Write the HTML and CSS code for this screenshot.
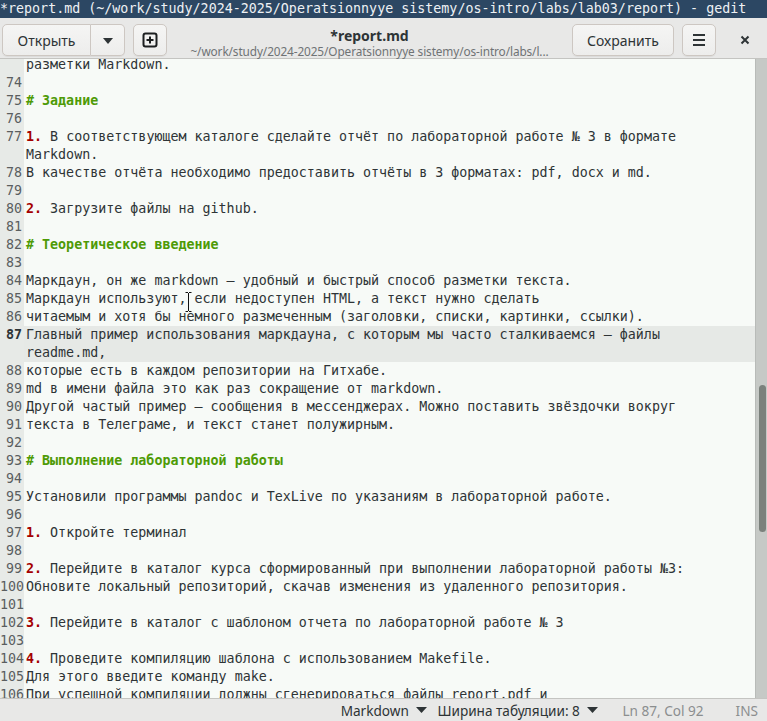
FILE: index.html
```html
<!DOCTYPE html>
<html lang="ru">
<head>
<meta charset="utf-8">
<title>gedit</title>
<link rel="stylesheet" href="styles.css">
</head>
<body>
<div class="window">
  <div class="titlebar">*report.md (~/work/study/2024-2025/Operatsionnyye sistemy/os-intro/labs/lab03/report) - gedit</div>
  <div class="headerbar">
    <div class="linked">
      <button class="btn open">Открыть</button>
      <button class="btn drop"><svg width="12" height="8" viewBox="0 0 12 8"><path d="M1 1h10L6 7z" fill="#2e3436"/></svg></button>
    </div>
    <button class="btn newtab"><svg width="16" height="16" viewBox="0 0 16 16"><rect x="1.5" y="1.5" width="13" height="13" rx="2" fill="none" stroke="#1c1f20" stroke-width="2"/><path d="M8 4.5v7M4.5 8h7" stroke="#1c1f20" stroke-width="2"/></svg></button>
    <div class="title">
      <div class="t1">*report.md</div>
      <div class="t2">~/work/study/2024-2025/Operatsionnyye sistemy/os-intro/labs/l...</div>
    </div>
    <button class="btn save">Сохранить</button>
    <button class="btn menu"><svg width="16" height="16" viewBox="0 0 16 16"><path d="M2 3h12M2 8h12M2 13h12" stroke="#2e3436" stroke-width="2"/></svg></button>
    <div class="close"><svg width="10" height="10" viewBox="0 0 10 10"><path d="M1.5 1.5l7 7M8.5 1.5l-7 7" stroke="#2e3436" stroke-width="2"/></svg></div>
  </div>
  <div class="editor">
    <div class="view">
      <div class="lines">
        <div class="row"><span class="ln"></span><span class="tx">разметки Markdown.</span></div>
        <div class="row"><span class="ln">74</span><span class="tx"></span></div>
        <div class="row"><span class="ln">75</span><span class="tx h"># Задание</span></div>
        <div class="row"><span class="ln">76</span><span class="tx"></span></div>
        <div class="row"><span class="ln">77</span><span class="tx"><b class="n">1.</b> В соответствующем каталоге сделайте отчёт по лабораторной работе № 3 в формате</span></div>
        <div class="row"><span class="ln"></span><span class="tx">Markdown.</span></div>
        <div class="row"><span class="ln">78</span><span class="tx">В качестве отчёта необходимо предоставить отчёты в 3 форматах: pdf, docx и md.</span></div>
        <div class="row"><span class="ln">79</span><span class="tx"></span></div>
        <div class="row"><span class="ln">80</span><span class="tx"><b class="n">2.</b> Загрузите файлы на github.</span></div>
        <div class="row"><span class="ln">81</span><span class="tx"></span></div>
        <div class="row"><span class="ln">82</span><span class="tx h"># Теоретическое введение</span></div>
        <div class="row"><span class="ln">83</span><span class="tx"></span></div>
        <div class="row"><span class="ln">84</span><span class="tx">Маркдаун, он же markdown — удобный и быстрый способ разметки текста.</span></div>
        <div class="row"><span class="ln">85</span><span class="tx">Маркдаун используют, если недоступен HTML, а текст нужно сделать</span></div>
        <div class="row"><span class="ln">86</span><span class="tx">читаемым и хотя бы немного размеченным (заголовки, списки, картинки, ссылки).</span></div>
        <div class="row cur"><span class="ln">87</span><span class="tx">Главный пример использования маркдауна, с которым мы часто сталкиваемся — файлы</span></div>
        <div class="row cur"><span class="ln"></span><span class="tx">readme.md,</span></div>
        <div class="row"><span class="ln">88</span><span class="tx">которые есть в каждом репозитории на Гитхабе.</span></div>
        <div class="row"><span class="ln">89</span><span class="tx">md в имени файла это как раз сокращение от markdown.</span></div>
        <div class="row"><span class="ln">90</span><span class="tx">Другой частый пример — сообщения в мессенджерах. Можно поставить звёздочки вокруг</span></div>
        <div class="row"><span class="ln">91</span><span class="tx">текста в Телеграме, и текст станет полужирным.</span></div>
        <div class="row"><span class="ln">92</span><span class="tx"></span></div>
        <div class="row"><span class="ln">93</span><span class="tx h"># Выполнение лабораторной работы</span></div>
        <div class="row"><span class="ln">94</span><span class="tx"></span></div>
        <div class="row"><span class="ln">95</span><span class="tx">Установили программы pandoc и TexLive по указаниям в лабораторной работе.</span></div>
        <div class="row"><span class="ln">96</span><span class="tx"></span></div>
        <div class="row"><span class="ln">97</span><span class="tx"><b class="n">1.</b> Откройте терминал</span></div>
        <div class="row"><span class="ln">98</span><span class="tx"></span></div>
        <div class="row"><span class="ln">99</span><span class="tx"><b class="n">2.</b> Перейдите в каталог курса сформированный при выполнении лабораторной работы №3:</span></div>
        <div class="row"><span class="ln">100</span><span class="tx">Обновите локальный репозиторий, скачав изменения из удаленного репозитория.</span></div>
        <div class="row"><span class="ln">101</span><span class="tx"></span></div>
        <div class="row"><span class="ln">102</span><span class="tx"><b class="n">3.</b> Перейдите в каталог с шаблоном отчета по лабораторной работе № 3</span></div>
        <div class="row"><span class="ln">103</span><span class="tx"></span></div>
        <div class="row"><span class="ln">104</span><span class="tx"><b class="n">4.</b> Проведите компиляцию шаблона с использованием Makefile.</span></div>
        <div class="row"><span class="ln">105</span><span class="tx">Для этого введите команду make.</span></div>
        <div class="row"><span class="ln">106</span><span class="tx">При успешной компиляции должны сгенерироваться файлы report.pdf и</span></div>
      </div>
      <svg class="ibeam" width="7" height="20" viewBox="0 0 7 20"><path d="M0.5 0.5h2.5M4 0.5h2.5M3.5 1v18M0.5 19.5h2.5M4 19.5h2.5" stroke="#111" stroke-width="1"/></svg>
    </div>
    <div class="scroll"><div class="thumb"></div></div>
  </div>
  <div class="statusbar">
    <span class="st">Markdown <svg width="11" height="7" viewBox="0 0 11 7"><path d="M0 0h11L5.5 6z" fill="#2e3436"/></svg></span>
    <span class="st tab">Ширина табуляции: 8 <svg width="11" height="7" viewBox="0 0 11 7"><path d="M0 0h11L5.5 6z" fill="#2e3436"/></svg></span>
    <span class="st dim pos">Ln 87, Col 92</span>
    <span class="st dim ins">INS</span>
  </div>
</div>
</body>
</html>
```
FILE: styles.css
```css
html, body {
  margin: 0;
  padding: 0;
  background: #e8e8e7;
}
.window {
  width: 767px;
  height: 721px;
  display: flex;
  flex-direction: column;
  overflow: hidden;
}
.titlebar {
  height: 18px;
  flex: none;
  background: #2c4763;
  color: #eef1f4;
  font-family: "DejaVu Sans Mono", monospace;
  font-size: 13.33px;
  line-height: 18px;
  white-space: pre;
  overflow: hidden;
}
.headerbar {
  height: 41px;
  flex: none;
  box-sizing: border-box;
  border-bottom: 1px solid #c4c4c1;
  background: #e8e8e7;
  display: flex;
  align-items: flex-start;
  padding: 6px 1px 0 2px;
  font-family: "Noto Sans", "Liberation Sans", sans-serif;
}
.btn {
  height: 32px;
  box-sizing: border-box;
  border: 1px solid #cdc7c2;
  border-radius: 5px;
  background: linear-gradient(#f5f5f4, #ededec);
  box-shadow: 0 1px 0 rgba(0,0,0,0.05);
  font-family: "Noto Sans", "Liberation Sans", sans-serif;
  font-size: 14px;
  color: #2e3436;
  padding: 0;
  display: flex;
  align-items: center;
  justify-content: center;
}
.linked {
  display: flex;
}
.open {
  width: 89px;
  border-radius: 5px 0 0 5px;
}
.drop {
  width: 34px;
  border-left: none;
  border-radius: 0 5px 5px 0;
  padding-top: 1px;
}
.newtab {
  width: 34px;
  margin-left: 8px;
}
.title {
  flex: 1;
  min-width: 0;
  text-align: center;
  padding-top: 3px;
}
.t1 {
  font-weight: bold;
  font-size: 14px;
  line-height: 18px;
  color: #2e3436;
}
.t2 {
  font-size: 11.8px;
  line-height: 12px;
  color: #6f7375;
  white-space: nowrap;
  letter-spacing: -0.1px;
}
.save {
  width: 102px;
}
.menu {
  width: 34px;
  margin-left: 8px;
}
.close {
  width: 42px;
  height: 32px;
  margin-left: 8px;
  display: flex;
  align-items: center;
  justify-content: center;
}
.editor {
  flex: 1;
  min-height: 0;
  display: flex;
  background: #f7faf7;
}
.view {
  flex: 1;
  min-width: 0;
  overflow: hidden;
  position: relative;
}
.lines {
  margin-top: -3px;
  font-family: "DejaVu Sans Mono", monospace;
  font-size: 13.33px;
  line-height: 18px;
  color: #2e3436;
}
.row {
  display: flex;
  height: 18px;
}
.ln {
  flex: none;
  width: 24px;
  box-sizing: border-box;
  padding-right: 2px;
  background: #e7eae7;
  text-align: right;
  color: #5a5e5f;
  white-space: pre;
}
.tx {
  flex: 1;
  padding-left: 2px;
  white-space: pre;
  overflow: hidden;
}
.cur .tx {
  background: #e6e9e6;
}
.cur .ln {
  font-weight: bold;
  color: #2e3436;
}
.h {
  color: #4e9a06;
  font-weight: bold;
}
.n {
  color: #a40000;
  font-weight: bold;
}
.ibeam {
  position: absolute;
  left: 185px;
  top: 233px;
}
.scroll {
  flex: none;
  width: 12px;
  background: #c6c9c6;
  border-left: 1px solid #b8bbb8;
  box-sizing: border-box;
  padding: 326px 1px 0 3px;
}
.thumb {
  width: 7px;
  height: 147px;
  border-radius: 4px;
  background: #7b817c;
}
.statusbar {
  height: 23px;
  flex: none;
  box-sizing: border-box;
  border-top: 1px solid #c4c4c1;
  background: #e8e8e7;
  display: flex;
  justify-content: flex-end;
  align-items: center;
  padding-right: 9px;
  font-family: "Noto Sans", "Liberation Sans", sans-serif;
  font-size: 13.6px;
  color: #2e3436;
}
.st {
  display: flex;
  align-items: center;
  gap: 4px;
  white-space: pre;
}
.tab {
  margin-left: 10px;
}
.pos {
  margin-left: 24px;
}
.ins {
  margin-left: 32px;
}
.dim {
  color: #8b8e8f;
}
```
